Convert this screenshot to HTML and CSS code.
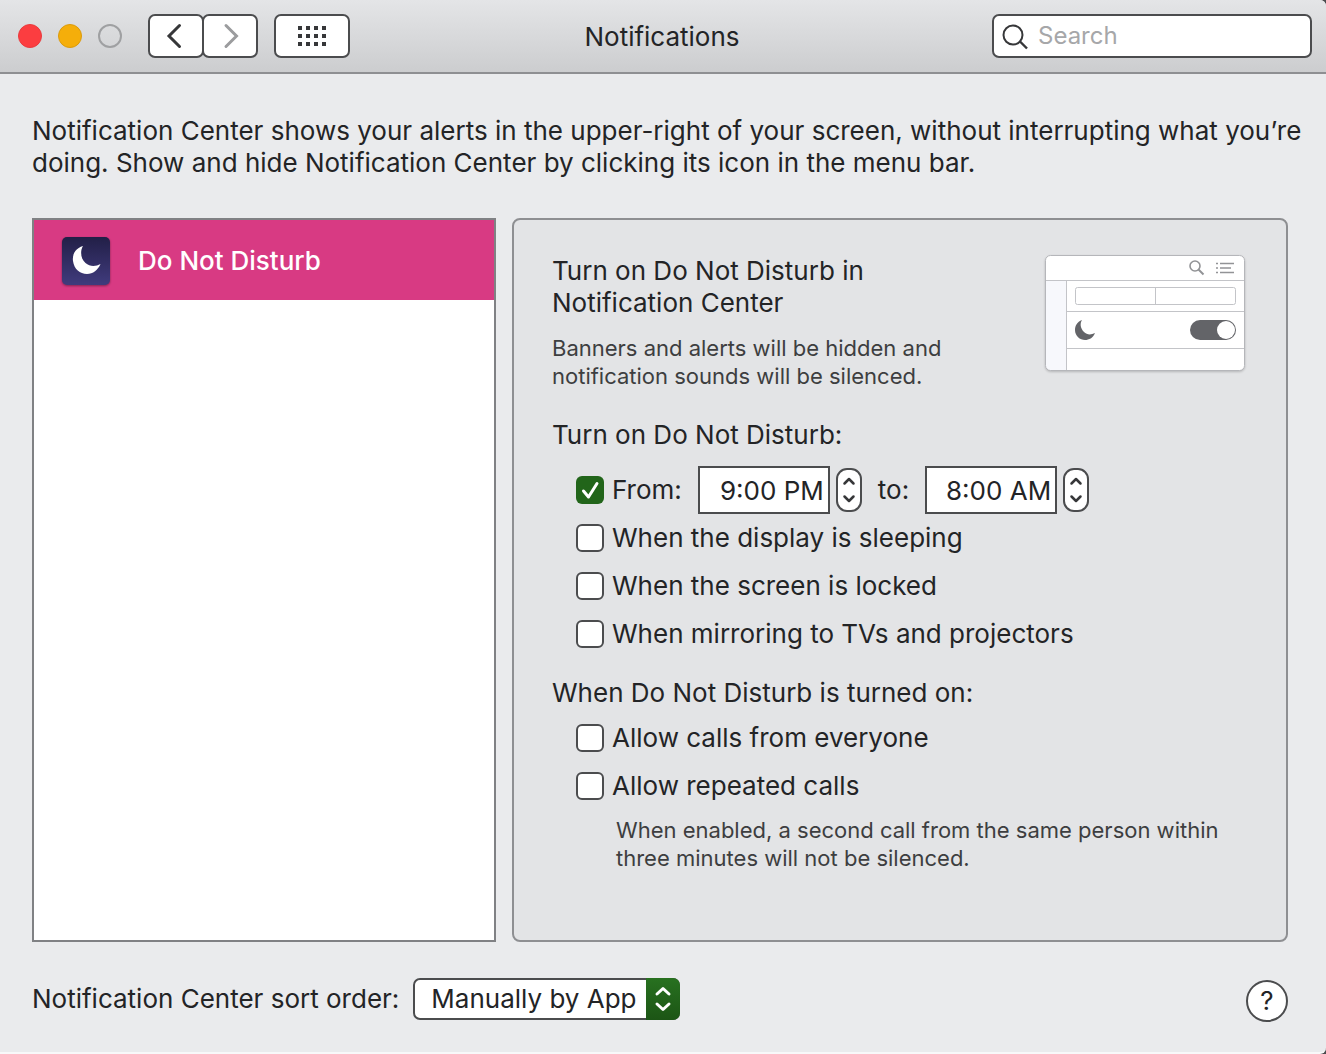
FILE: index.html
```
<!DOCTYPE html>
<html lang="en">
<head>
<meta charset="utf-8">
<meta name="viewport" content="width=device-width, initial-scale=1">
<title>Notifications</title>
<link rel="stylesheet" href="styles.css">
</head>
<body>
<div class="window">
  <header class="toolbar">
    <div class="toolbar-left">
      <div class="lights">
        <button class="light light-close" type="button" aria-label="Close"></button>
        <button class="light light-minimize" type="button" aria-label="Minimize"></button>
        <button class="light light-zoom" type="button" aria-label="Zoom" disabled></button>
      </div>
      <nav class="history">
        <button class="tool" type="button" aria-label="Back"><svg width="24" height="28" viewBox="0 0 24 28"><path d="M15.500 3.500 5 14 15.500 24.500" fill="none" stroke="#363739" stroke-width="3" stroke-linecap="round"/></svg></button>
        <button class="tool" type="button" aria-label="Forward"><svg width="24" height="28" viewBox="0 0 24 28"><path d="M8 3.500 18.500 14 8 24.500" fill="none" stroke="#9b9c9e" stroke-width="3" stroke-linecap="round"/></svg></button>
      </nav>
      <button class="tool tool-all" type="button" aria-label="Show All"><svg width="28" height="20" viewBox="0 0 28 20"><path d="M0 2h28M0 10h28M0 18h28" stroke="#363739" stroke-width="4" stroke-dasharray="4 4"/></svg></button>
    </div>
    <h1 class="title">Notifications</h1>
    <label class="search">
      <svg width="28" height="28" viewBox="0 0 28 28" aria-hidden="true"><circle cx="11" cy="13" r="9.500" fill="none" stroke="#363739" stroke-width="2"/><path d="M18 19.500l7 7" stroke="#363739" stroke-width="2.400"/></svg>
      <input class="search-input" type="search" placeholder="Search" aria-label="Search">
    </label>
  </header>

  <main class="content">
    <p class="intro">Notification Center shows your alerts in the upper-right of your screen, without interrupting what you’re doing. Show and hide Notification Center by clicking its icon in the menu bar.</p>

    <div class="panes">
      <ul class="list">
        <li><button class="item" type="button">
          <svg class="item-icon" width="48" height="48" viewBox="0 0 48 48" aria-hidden="true"><defs><linearGradient id="night" x1="0" y1="0" x2="0" y2="1"><stop offset="0" stop-color="#221f47"/><stop offset="1" stop-color="#403b7d"/></linearGradient></defs><rect width="48" height="48" rx="5" fill="url(#night)"/><path d="M21 9C14 11 10 17 11 24c1 8 7 13 14 13 6 0 11-4 13.500-10C34 29.500 28 30 23.500 26 18.500 21.500 18 14 21 9z" fill="#fff"/></svg>
          Do Not Disturb
        </button></li>
      </ul>

      <section class="panel">
        <div class="summary">
          <div>
            <h2 class="heading">Turn on Do Not Disturb in<br>Notification Center</h2>
            <p class="note">Banners and alerts will be hidden and<br>notification sounds will be silenced.</p>
          </div>
          <svg class="preview" width="200" height="116" viewBox="0 0 200 116" aria-hidden="true">
            <rect x=".5" y=".5" width="199" height="115" rx="5" fill="#fff"/>
            <path d="M1 25h20v90H6q-5 0-5-5z" fill="#f7f8fc"/>
            <rect x=".5" y=".5" width="199" height="115" rx="5" fill="none" stroke="#b5b6ba"/>
            <path d="M1 25.500h198M21.500 26v89M22 56.500h177M22 93.500h177" stroke="#c3c4c8" fill="none"/>
            <rect x="30.500" y="32.500" width="160" height="17" rx="2" fill="none" stroke="#c3c4c8"/>
            <path d="M110.500 33v16" stroke="#c3c4c8"/>
            <circle cx="150" cy="11" r="5" fill="none" stroke="#929396" stroke-width="1.600"/>
            <path d="M153.500 14.500l5 5" stroke="#929396" stroke-width="2"/>
            <path d="M171 8.500h2m2 0h14M171 13h2m2 0h11M171 17.500h2m2 0h14" stroke="#929396" stroke-width="1.700"/>
            <path d="M37 65C32 67 30 71 30 75c0 6 5 10 10 10 4 0 8-2 10-7-4 2-8 2-11-1-4-4-4-9-2-12z" fill="#636468"/>
            <rect x="145" y="65" width="46" height="20" rx="10" fill="#636468"/>
            <circle cx="181" cy="75" r="9" fill="#fff"/>
          </svg>
        </div>

        <fieldset class="group group-schedule">
          <legend class="legend">Turn on Do Not Disturb:</legend>
          <div class="row row-time">
            <label class="check"><input type="checkbox" checked>From:</label>
            <input class="time time-from" type="text" value="9:00 PM" aria-label="From time">
            <button class="stepper" type="button" aria-label="Change from time"><svg width="14" height="28" viewBox="0 0 14 28"><path d="M2.500 7.500 7 3l4.500 4.500M2.500 20.500 7 25l4.500-4.500" fill="none" stroke="#363739" stroke-width="2.500" stroke-linecap="round" stroke-linejoin="round"/></svg></button>
            <label class="to" for="time-to">to:</label>
            <input class="time" id="time-to" type="text" value="8:00 AM">
            <button class="stepper" type="button" aria-label="Change to time"><svg width="14" height="28" viewBox="0 0 14 28"><path d="M2.500 7.500 7 3l4.500 4.500M2.500 20.500 7 25l4.500-4.500" fill="none" stroke="#363739" stroke-width="2.500" stroke-linecap="round" stroke-linejoin="round"/></svg></button>
          </div>
          <div class="row"><label class="check"><input type="checkbox">When the display is sleeping</label></div>
          <div class="row"><label class="check"><input type="checkbox">When the screen is locked</label></div>
          <div class="row"><label class="check"><input type="checkbox">When mirroring to TVs and projectors</label></div>
        </fieldset>

        <fieldset class="group group-calls">
          <legend class="legend">When Do Not Disturb is turned on:</legend>
          <div class="row"><label class="check"><input type="checkbox">Allow calls from everyone</label></div>
          <div class="row"><label class="check"><input type="checkbox" aria-describedby="repeat-note">Allow repeated calls</label></div>
          <p class="note note-indent" id="repeat-note">When enabled, a second call from the same person within<br>three minutes will not be silenced.</p>
        </fieldset>
      </section>
    </div>

    <footer class="footer">
      <div class="sort">
        <label for="sort">Notification Center sort order:</label>
        <div class="popup">
          <select class="popup-select" id="sort"><option>Manually by App</option><option>Recents</option></select>
          <span class="popup-cap"><svg width="18" height="26" viewBox="0 0 18 26" aria-hidden="true"><path d="M3 8 9 2.500l6 5.500M3 18l6 5.500 6-5.500" fill="none" stroke="#fff" stroke-width="3" stroke-linecap="round" stroke-linejoin="round"/></svg></span>
        </div>
      </div>
      <button class="help" type="button" aria-label="Help">?</button>
    </footer>
  </main>
</div>
</body>
</html>
```
FILE: styles.css
```
* {
  box-sizing: border-box;
}

body {
  margin: 0;
  background: #4b4c4e;
  color: #232426;
  font: 26px/32px Inter, "Liberation Sans", sans-serif;
}

h1, h2, p, ul, fieldset {
  margin: 0;
  padding: 0;
  border: 0;
  font-size: inherit;
  font-weight: 400;
}

button, input, select {
  margin: 0;
  padding: 0;
  color: inherit;
  font: inherit;
}

svg {
  display: block;
  flex: none;
}

.window {
  display: flex;
  flex-direction: column;
  min-height: 100vh;
  background: #eaebed;
  border-bottom: 2px solid #f8f8f9;
  border-radius: 0 6px 6px 0;
  overflow: hidden;
}

/* Toolbar */
.toolbar {
  display: grid;
  grid-template-columns: 1fr auto 1fr;
  align-items: center;
  height: 74px;
  padding: 0 14px 0 18px;
  background: linear-gradient(#e4e5e7, #cccdcf);
  border-bottom: 2px solid #8e8f92;
}

.toolbar-left,
.lights,
.history {
  display: flex;
  align-items: center;
}

.lights {
  gap: 16px;
  margin-right: 26px;
}

.light {
  width: 24px;
  height: 24px;
  border: 1px solid transparent;
  border-radius: 50%;
}

.light-close {
  background: #fc3d40;
  border-color: #e93a3d;
}

.light-minimize {
  background: #f5ae0a;
  border-color: #db9b0c;
}

.light-zoom {
  background: transparent;
  border: 2px solid #9fa0a2;
}

.title {
  padding: 2px 6px 0 0;
}

.tool {
  display: flex;
  align-items: center;
  justify-content: center;
  width: 56px;
  height: 44px;
  background: #fff;
  border: 2px solid #4b4c4e;
  border-radius: 7px;
}

.tool + .tool {
  margin-left: -2px;
}

.tool-all {
  width: 76px;
  margin-left: 16px;
}

.search {
  display: flex;
  align-items: center;
  justify-self: end;
  gap: 8px;
  width: 320px;
  height: 44px;
  padding: 0 8px;
  background: #fff;
  border: 2px solid #4b4c4e;
  border-radius: 7px;
}

.search-input {
  flex: 1;
  min-width: 0;
  background: none;
  border: 0;
  outline: 0;
  font-size: 24px;
}

.search-input::placeholder {
  color: #a6a7a9;
  opacity: 1;
}

/* Content */
.content {
  display: flex;
  flex: 1;
  flex-direction: column;
  padding: 41px 38px 30px 32px;
}

.intro {
  margin-right: -20px;
}

.panes {
  display: grid;
  flex: 1;
  grid-template-columns: 464fr 776fr;
  gap: 16px;
  margin-top: 39px;
}

.list {
  background: #fff;
  border: 2px solid #808184;
  list-style: none;
}

.item {
  display: flex;
  align-items: center;
  gap: 28px;
  width: 100%;
  height: 80px;
  padding: 2px 28px 0;
  background: #d83a83;
  border: 0;
  color: #fff;
  font-weight: 500;
}

.item-icon {
  filter: drop-shadow(0 1px 1px #0006);
}

.panel {
  padding: 35px 38px;
  background: #e3e4e6;
  border: 2px solid #8e8f92;
  border-radius: 8px;
}

.summary {
  display: flex;
  align-items: flex-start;
  justify-content: space-between;
}

.preview {
  margin-right: 3px;
  filter: drop-shadow(0 1px 1px #0003);
}

.note {
  margin-top: 15px;
  color: #3d3e40;
  font-size: 22px;
  line-height: 28px;
}

.note-indent {
  margin: 6px 0 0 64px;
}

.group {
  min-width: 0;
}

.group-schedule {
  margin-top: 29px;
}

.group-calls {
  margin-top: 19px;
}

.legend {
  margin-bottom: 5px;
  padding: 0;
}

.row {
  display: flex;
  align-items: center;
  height: 48px;
  padding-left: 24px;
}

.row-time {
  margin-top: 10px;
}

.check {
  display: flex;
  align-items: center;
  gap: 8px;
}

.check input {
  flex: none;
  width: 28px;
  height: 28px;
  background: #fff;
  border: 2px solid #4b4c4e;
  border-radius: 6px;
  appearance: none;
}

.check input:checked {
  background: #22651a url("data:image/svg+xml,%3Csvg xmlns='http://www.w3.org/2000/svg' viewBox='0 0 28 28'%3E%3Cpath d='M7.500 15l5 6L21 7.500' fill='none' stroke='white' stroke-width='3' stroke-linecap='round' stroke-linejoin='round'/%3E%3C/svg%3E") center / 28px 28px;
  border: 0;
}

.time {
  width: 132px;
  height: 48px;
  padding-right: 4px;
  background: #fff;
  border: 2px solid #4b4c4e;
  text-align: right;
}

.time-from {
  margin-left: 16px;
}

.stepper {
  display: flex;
  align-items: center;
  justify-content: center;
  width: 26px;
  height: 44px;
  margin-left: 6px;
  background: #fff;
  border: 2px solid #4b4c4e;
  border-radius: 11px;
}

.to {
  margin: 0 16px;
}

/* Footer */
.footer {
  display: flex;
  align-items: flex-end;
  justify-content: space-between;
  margin-top: 36px;
}

.sort {
  display: flex;
  align-items: center;
  gap: 14px;
  padding-bottom: 2px;
}

.popup {
  display: grid;
  grid-template-columns: 1fr 34px;
}

.popup-select {
  grid-area: 1 / 1 / 2 / 3;
  width: 267px;
  height: 42px;
  padding: 0 36px 0 16px;
  background: #fff;
  border: 2px solid #4b4c4e;
  border-radius: 7px;
  appearance: none;
}

.popup-cap {
  display: flex;
  grid-area: 1 / 2 / 2 / 3;
  align-items: center;
  justify-content: center;
  background: linear-gradient(#287120, #1c5515);
  border-radius: 0 7px 7px 0;
  pointer-events: none;
}

.help {
  width: 42px;
  height: 42px;
  background: #fff;
  border: 2px solid #4b4c4e;
  border-radius: 50%;
}
```
